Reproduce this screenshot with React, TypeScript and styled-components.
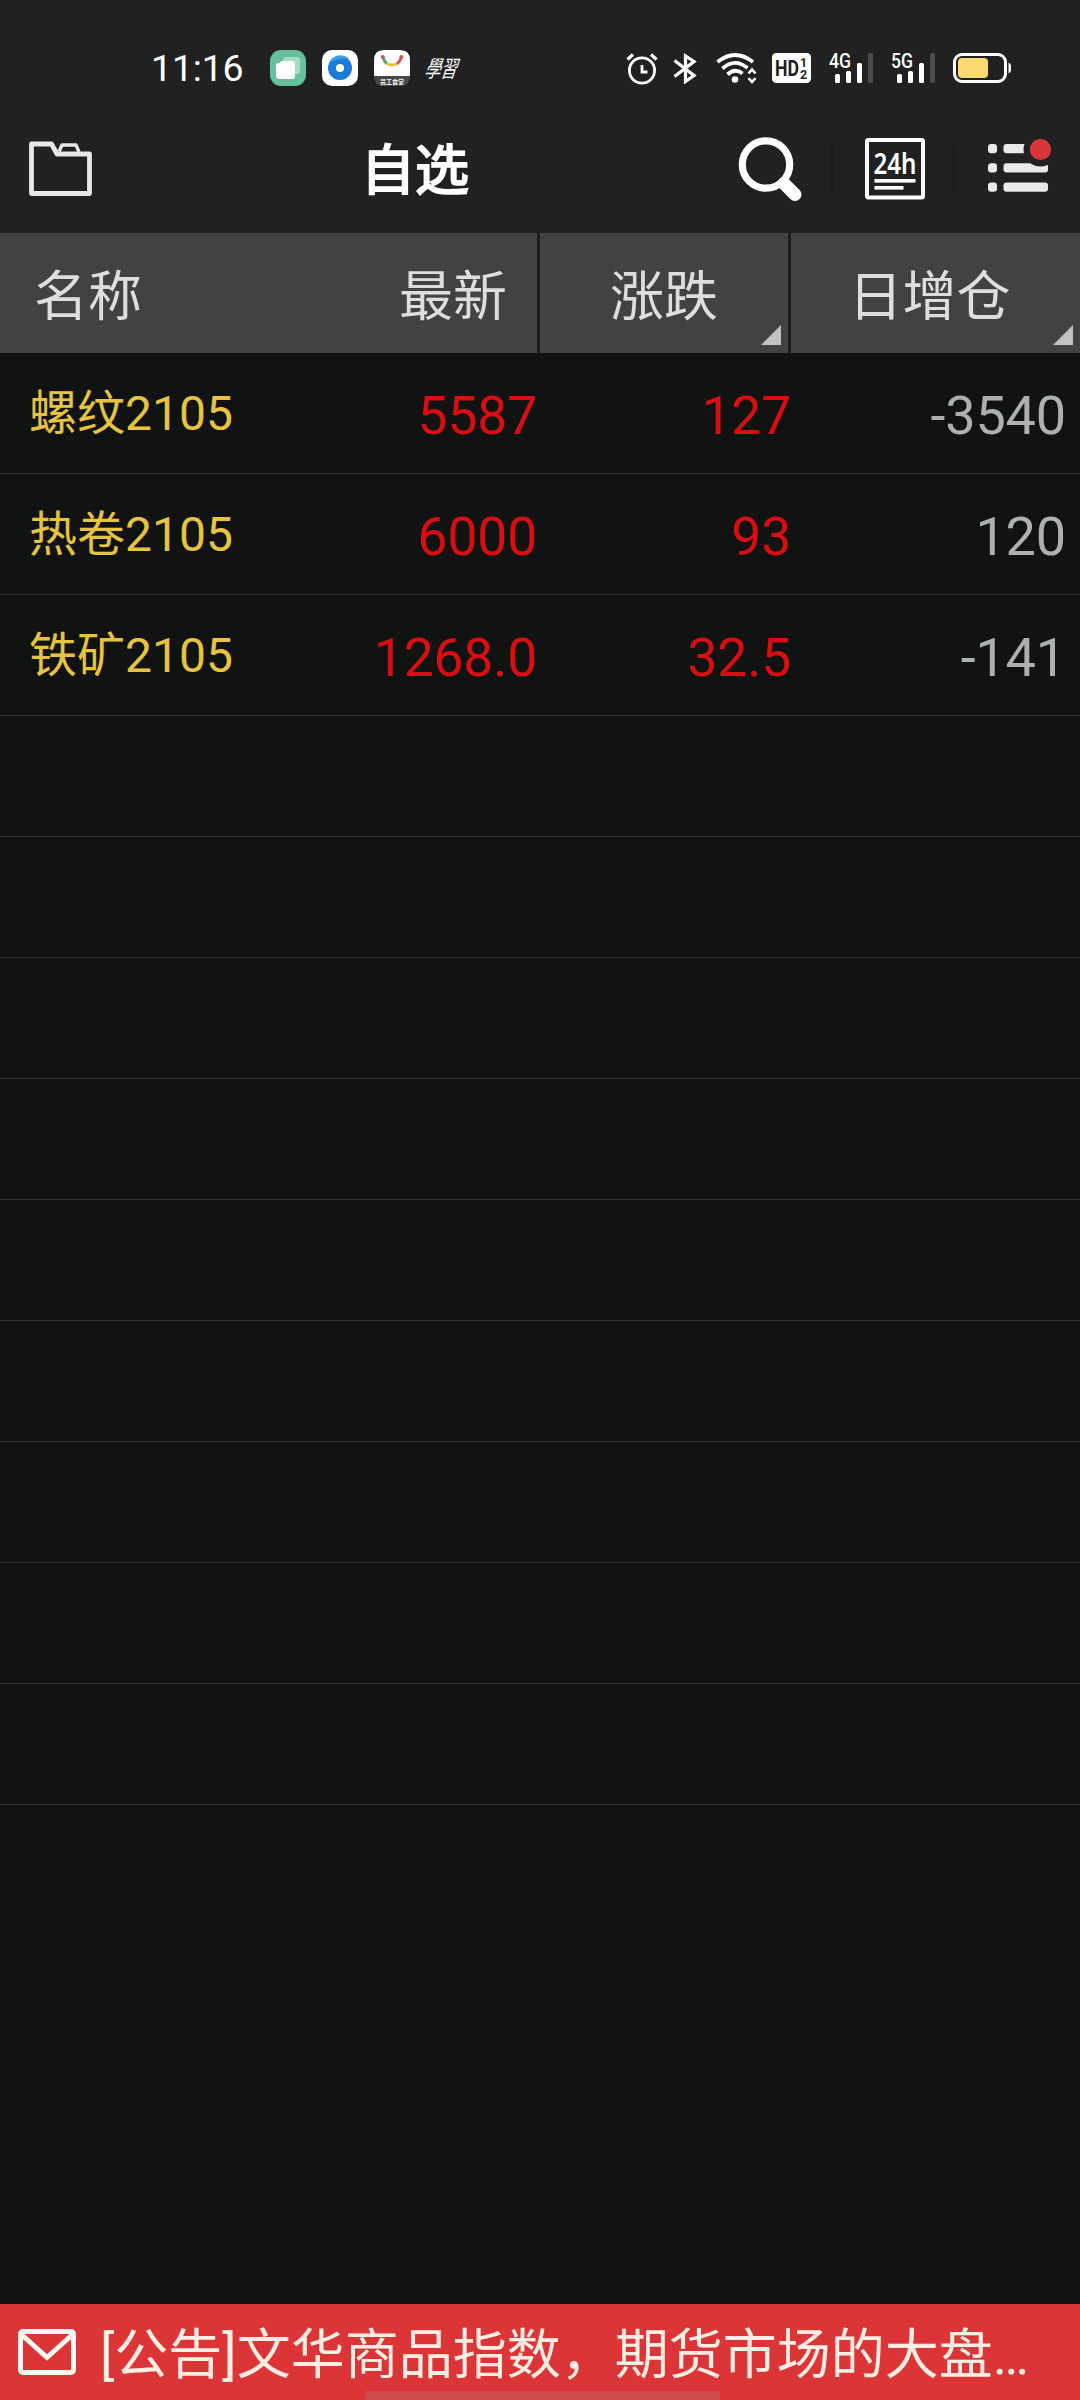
import React from 'react';
import styled, { createGlobalStyle } from 'styled-components';

const GlobalStyle = createGlobalStyle`
  * { box-sizing: border-box; }
  html, body { margin: 0; padding: 0; background: #101312; }
  svg { display: block; flex: none; overflow: visible; }
`;

const FONT = `Roboto, 'Noto Sans CJK SC', sans-serif`;

const Screen = styled.div`
  width: 1080px;
  height: 2400px;
  display: flex;
  flex-direction: column;
  background: #101312;
  font-family: ${FONT};
  overflow: hidden;
`;

const StatusBar = styled.div`
  height: 105px;
  flex: none;
  display: flex;
  align-items: flex-start;
  justify-content: space-between;
  padding: 50px 69px 0 151px;
  background: #212121;
`;

const StatusGroup = styled.div<{ $gap: number }>`
  display: flex;
  align-items: center;
  height: 36px;
  gap: ${(p) => p.$gap}px;
`;

const Clock = styled.span`
  width: 103px;
  font-size: 37.5px;
  line-height: 37px;
  letter-spacing: -0.2px;
  color: #fff;
`;

const Toolbar = styled.div`
  height: 128px;
  flex: none;
  display: grid;
  grid-template-columns: 361px 1fr auto;
  align-items: center;
  padding-right: 29px;
  background: #212121;
`;

const FolderButton = styled.div`
  padding-left: 28px;
`;

const Title = styled.h1`
  margin: 0;
  height: 128px;
  font-size: 54px;
  line-height: 134px;
  font-weight: 400;
  -webkit-text-stroke: 2px #fff;
  color: #fff;
`;

const Actions = styled.div`
  display: flex;
  align-items: center;
`;

const Divider = styled.i<{ $before: number; $after: number }>`
  width: 4px;
  height: 48px;
  margin: 0 ${(p) => p.$after}px 0 ${(p) => p.$before}px;
  background: #1d1d1d;
`;

const columns = '537px 251px 292px';

const HeaderRow = styled.div`
  height: 120px;
  flex: none;
  display: grid;
  grid-template-columns: ${columns};
  background: #424242;
`;

const HeaderCell = styled.div<{ $align?: string; $divided?: boolean; $inset?: number }>`
  position: relative;
  display: flex;
  justify-content: ${(p) => p.$align || 'center'};
  padding: ${(p) => (p.$divided ? `0 ${p.$inset || 0}px 0 0` : '0 30px 0 34px')};
  border-left: ${(p) => (p.$divided ? '3px solid #1c1c1c' : '0')};
  font-size: 54px;
  line-height: 129px;
  color: #dedede;
  height: 120px;
`;

const SortCorner = styled.i`
  position: absolute;
  right: 7px;
  bottom: 8px;
  width: 20px;
  height: 20px;
  background: #c2c2c2;
  clip-path: polygon(100% 0, 100% 100%, 0 100%);
`;

const List = styled.div`
  flex: 1;
`;

const Row = styled.div`
  height: 121px;
  display: grid;
  grid-template-columns: 310px 227px 254px 1fr;
  padding-right: 14px;
  border-bottom: 1px solid #303231;
`;

const Name = styled.div`
  padding-left: 29px;
  height: 120px;
  font-size: 48px;
  line-height: 121px;
  color: #e6c440;
  white-space: nowrap;
`;

const Value = styled.div<{ $muted?: boolean }>`
  font-size: ${(p) => (p.$muted ? 54 : 53.4)}px;
  letter-spacing: -0.15px;
  line-height: 125px;
  height: 120px;
  text-align: right;
  color: ${(p) => (p.$muted ? '#adb0af' : '#d80e13')};
`;

const Notice = styled.div`
  position: relative;
  height: 96px;
  flex: none;
  display: flex;
  align-items: center;
  padding-left: 18px;
  gap: 24px;
  background: #db3538;
`;

const NoticeText = styled.span`
  font-size: 54px;
  line-height: 96px;
  padding-top: 8px;
  color: #ffece2;
  white-space: nowrap;
`;

const HomeIndicator = styled.i`
  position: absolute;
  left: 365px;
  bottom: 0;
  width: 355px;
  height: 9px;
  background: #ce4a4b;
`;

const AppFiles = () => (
  <svg width="36" height="36" viewBox="0 0 36 36">
    <rect width="36" height="36" rx="11" fill="#64c19b" />
    <rect x="13" y="7" width="17" height="17" rx="3" fill="#a5dec6" />
    <path d="M6 15q0-2 2-2h2q0-2 2-2h10q3 0 3 3v12q0 3-3 3H9q-3 0-3-3z" fill="#fff" />
  </svg>
);

const AppDisc = () => (
  <svg width="36" height="36" viewBox="0 0 36 36">
    <rect width="36" height="36" rx="10" fill="#fff" />
    <circle cx="18" cy="18" r="12" fill="#1c7bd6" />
    <path d="M7 13a12 12 0 0 1 20-4q-11-1-20 4z" fill="#3f9cec" />
    <circle cx="18" cy="18" r="4" fill="#fff" />
  </svg>
);

const AppMarket = () => (
  <svg width="36" height="36" viewBox="0 0 36 36">
    <path d="M0 26V10Q0 0 10 0H26Q36 0 36 10V26Z" fill="#fff" />
    <path d="M0 26H36Q36 36 26 36H10Q0 36 0 26Z" fill="#484848" />
    <text x="6" y="33.500" fontFamily="Noto Sans CJK SC" fontWeight="700" fontSize="6" fill="#fff">员工食堂</text>
    <g fill="none" strokeWidth="3">
      <path d="M9 7.500Q10 11.500 13 13.600" stroke="#4aa679" />
      <path d="M12.500 13.500Q18 16.500 23.500 13.500" stroke="#e9c23f" />
      <path d="M23 13.700Q26.500 11 27.500 7" stroke="#dc534d" />
    </g>
    <circle cx="8.800" cy="7" r="2" fill="#c9564f" />
    <circle cx="27.300" cy="7" r="2" fill="#c9564f" />
  </svg>
);

const AppStudy = () => (
  <svg width="38" height="36" viewBox="0 0 38 36">
    <text x="0" y="27.500" transform="translate(7 0) skewX(-18)" fontFamily="Noto Sans CJK TC" fontWeight="400" fontSize="23" fill="#fff" textLength="32" lengthAdjust="spacingAndGlyphs">學習</text>
  </svg>
);

const Alarm = () => (
  <svg width="32" height="34" viewBox="0 0 32 34" fill="none" stroke="#fff" strokeWidth="2.800">
    <circle cx="16" cy="19.500" r="12.600" />
    <path d="M1.500 8.500L7 3.500M30.500 8.500L25 3.500" strokeWidth="3.200" />
    <path d="M16 14v7h5.500" />
  </svg>
);

const Bluetooth = () => (
  <svg width="28" height="32" viewBox="0 0 28 32" fill="none" stroke="#fff" strokeWidth="3.200">
    <path d="M1.500 8.500L21 23.500L12.500 29.500V4L21 9.500L1.500 24.500" />
  </svg>
);

const Wifi = () => (
  <svg width="41" height="32" viewBox="0 0 41 32" fill="none" stroke="#fff" strokeWidth="3.800">
    <path d="M1.500 10Q19-4 37 10" />
    <path d="M6.500 16.500Q19 5.500 31.500 16" />
    <path d="M11.500 22.500Q19 15.500 26.500 21.500" />
    <circle cx="19" cy="27.500" r="3.300" fill="#fff" stroke="none" />
    <path d="M32.500 21.500l3.500-4 3.500 4M32.500 26l3.500 4 3.500-4" strokeWidth="2.600" />
  </svg>
);

const HdBadge = () => (
  <svg width="42" height="30" viewBox="0 0 42 30">
    <rect width="39" height="30" rx="4.500" fill="#fff" />
    <g fontFamily="Roboto" fontWeight="700" fill="#1f1f1f">
      <text x="3" y="23" fontSize="22" textLength="24" lengthAdjust="spacingAndGlyphs">HD</text>
      <text x="28" y="14" fontSize="12.500">1</text>
      <text x="28" y="25.500" fontSize="12.500">2</text>
    </g>
  </svg>
);

const Signal = ({ label }: { label: string }) => (
  <svg width="47" height="32" viewBox="0 0 47 32">
    <text x="0" y="15.500" fontFamily="Roboto" fontWeight="500" fontSize="20" fill="#fff" textLength="22" lengthAdjust="spacingAndGlyphs">{label}</text>
    <g fill="#fff">
      <rect x="6" y="22" width="5" height="9" rx="1.500" />
      <rect x="17" y="19" width="5" height="12" rx="1.500" />
      <rect x="28" y="11" width="5" height="20" rx="1.500" />
      <rect x="39" y="1" width="5" height="30" rx="1.500" fill="#4c4c4c" />
    </g>
  </svg>
);

const Battery = () => (
  <svg width="58" height="30" viewBox="0 0 58 30">
    <rect x="1.500" y="1.500" width="51" height="27" rx="7.500" fill="none" stroke="#fff" strokeWidth="3" />
    <rect x="5" y="5" width="30" height="20" rx="4" fill="#fada70" />
    <path d="M55.500 9.500q2.500 1 2.500 3v5q0 2-2.500 3z" fill="#fff" />
  </svg>
);

const Folder = () => (
  <svg width="66" height="58" viewBox="0 0 66 58" fill="none" stroke="#e8e8e8" strokeLinejoin="round">
    <path d="M3.500 4H23.500L29 14H61.500V53.500H3.500Z" strokeWidth="4.800" />
    <path d="M31 11.500L34 5H48L51 12" strokeWidth="3.400" />
  </svg>
);

const SearchIcon = () => (
  <svg width="65" height="66" viewBox="0 0 65 66" fill="none" stroke="#fff">
    <circle cx="28" cy="28.500" r="23.700" strokeWidth="7.200" />
    <path d="M46 47.500L57 58.500" strokeWidth="13" strokeLinecap="round" />
    <path d="M42 43.500L48 49.500" strokeWidth="8" />
  </svg>
);

const News24 = () => (
  <svg width="60" height="62" viewBox="0 0 60 62">
    <rect x="2" y="2" width="56" height="57.500" rx="1.500" fill="none" stroke="#fff" strokeWidth="4" />
    <text x="8.500" y="35.500" fontFamily="Noto Sans" fontWeight="600" fontSize="29" fill="#fff" textLength="43" lengthAdjust="spacingAndGlyphs">24h</text>
    <rect x="9.500" y="41" width="41" height="3.600" fill="#fff" />
    <rect x="9.500" y="48" width="29" height="3.600" fill="#fff" />
  </svg>
);

const MenuIcon = () => (
  <svg width="64" height="62" viewBox="0 0 64 62" fill="#e9e9e9">
    {[6, 25.3, 44.6].map((y) => (
      <g key={y}>
        <rect x="1" y={y} width="9" height="9.200" rx="3" />
        <rect x="16.500" y={y} width="44.500" height="9.200" rx="3" />
      </g>
    ))}
    <circle cx="53.500" cy="11.500" r="17" fill="#212121" />
    <circle cx="53.500" cy="11.500" r="10.600" fill="#da363a" />
  </svg>
);

const Mail = () => (
  <svg width="58" height="46" viewBox="0 0 58 46" fill="none" stroke="#fff6f0" strokeWidth="5">
    <rect x="2.500" y="2.500" width="53" height="41" rx="2.500" />
    <path d="M4 6L29 28.500L54 6" />
  </svg>
);

const quotes = [
  { name: '螺纹2105', last: '5587', change: '127', position: '-3540' },
  { name: '热卷2105', last: '6000', change: '93', position: '120' },
  { name: '铁矿2105', last: '1268.0', change: '32.5', position: '-141' },
];

const emptyRows = Array.from({ length: 9 }, (_, i) => i);

export default function App() {
  return (
    <Screen>
      <GlobalStyle />
      <StatusBar>
        <StatusGroup $gap={16}>
          <Clock>11:16</Clock>
          <AppFiles />
          <AppDisc />
          <AppMarket />
          <AppStudy />
        </StatusGroup>
        <StatusGroup $gap={15}>
          <Alarm />
          <Bluetooth />
          <Wifi />
          <HdBadge />
          <Signal label="4G" />
          <Signal label="5G" />
          <Battery />
        </StatusGroup>
      </StatusBar>
      <Toolbar>
        <FolderButton><Folder /></FolderButton>
        <Title>自选</Title>
        <Actions>
          <SearchIcon />
          <Divider $before={27} $after={31} />
          <News24 />
          <Divider $before={27} $after={31} />
          <MenuIcon />
        </Actions>
      </Toolbar>
      <HeaderRow>
        <HeaderCell $align="space-between">
          <span>名称</span>
          <span>最新</span>
        </HeaderCell>
        <HeaderCell $divided>
          涨跌
          <SortCorner />
        </HeaderCell>
        <HeaderCell $divided $inset={12}>
          日增仓
          <SortCorner />
        </HeaderCell>
      </HeaderRow>
      <List>
        {quotes.map((q) => (
          <Row key={q.name}>
            <Name>{q.name}</Name>
            <Value>{q.last}</Value>
            <Value>{q.change}</Value>
            <Value $muted>{q.position}</Value>
          </Row>
        ))}
        {emptyRows.map((i) => (
          <Row key={i} />
        ))}
      </List>
      <Notice>
        <Mail />
        <NoticeText>[公告]文华商品指数，期货市场的大盘…</NoticeText>
        <HomeIndicator />
      </Notice>
    </Screen>
  );
}
